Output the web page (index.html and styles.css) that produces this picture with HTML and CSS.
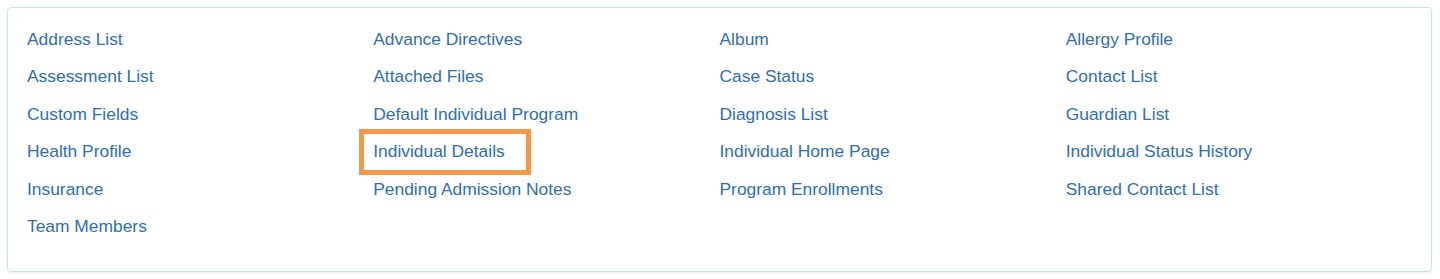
FILE: index.html
```html
<!DOCTYPE html>
<html>
<head>
<meta charset="utf-8">
<link rel="stylesheet" href="styles.css">
</head>
<body>
<div class="page">
  <div class="panel">
    <div class="links">
      <div class="item"><a href="#">Address List</a></div>
      <div class="item"><a href="#">Advance Directives</a></div>
      <div class="item"><a href="#">Album</a></div>
      <div class="item"><a href="#">Allergy Profile</a></div>
      <div class="item"><a href="#">Assessment List</a></div>
      <div class="item"><a href="#">Attached Files</a></div>
      <div class="item"><a href="#">Case Status</a></div>
      <div class="item"><a href="#">Contact List</a></div>
      <div class="item"><a href="#">Custom Fields</a></div>
      <div class="item"><a href="#">Default Individual Program</a></div>
      <div class="item"><a href="#">Diagnosis List</a></div>
      <div class="item"><a href="#">Guardian List</a></div>
      <div class="item"><a href="#">Health Profile</a></div>
      <div class="item"><a href="#" class="highlight">Individual Details</a></div>
      <div class="item"><a href="#">Individual Home Page</a></div>
      <div class="item"><a href="#">Individual Status History</a></div>
      <div class="item"><a href="#">Insurance</a></div>
      <div class="item"><a href="#">Pending Admission Notes</a></div>
      <div class="item"><a href="#">Program Enrollments</a></div>
      <div class="item"><a href="#">Shared Contact List</a></div>
      <div class="item"><a href="#">Team Members</a></div>
    </div>
  </div>
</div>
</body>
</html>
```
FILE: styles.css
```css
html, body {
  margin: 0;
  padding: 0;
  background: #ffffff;
}
.page {
  padding: 7px 8px 7px 7px;
}
.panel {
  border: 1px solid #bfe6e9;
  border-radius: 4px;
  box-shadow: 0 1px 2px rgba(0, 0, 0, 0.08);
  padding: 12px 19px 25px 19px;
  height: 226px;
  box-sizing: content-box;
}
.links {
  display: grid;
  grid-template-columns: repeat(4, 1fr);
  grid-auto-rows: 37.5px;
}
.item {
  display: flex;
  align-items: center;
}
.item a {
  font-family: "Liberation Sans", Arial, sans-serif;
  font-size: 17.4px;
  line-height: 20px;
  color: #2f6fb0;
  text-decoration: none;
}
.highlight {
  position: relative;
}
.highlight::after {
  content: "";
  position: absolute;
  left: -14px;
  right: -26px;
  top: -12px;
  bottom: -14px;
  border: 5px solid #f5984a;
}
```
